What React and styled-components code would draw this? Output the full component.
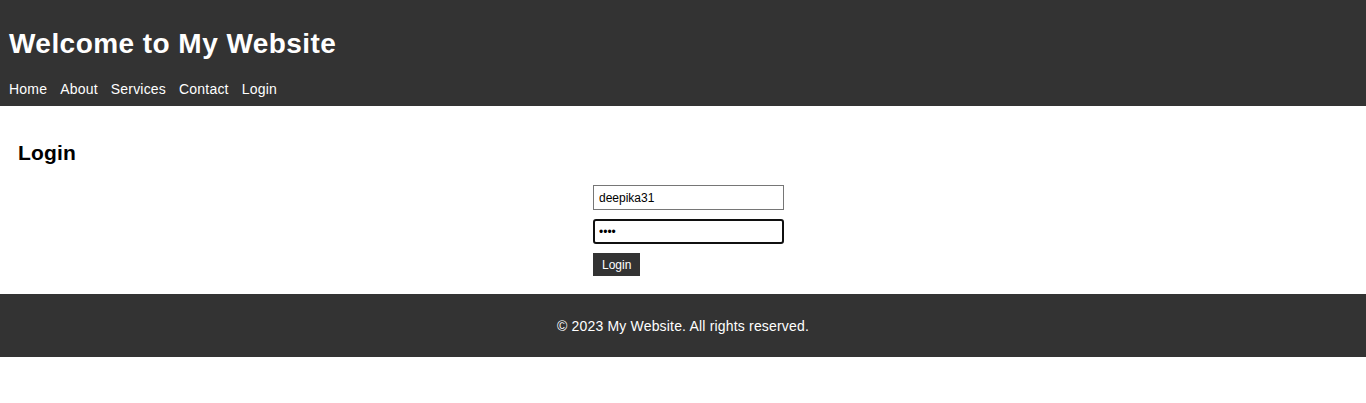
import React from "react";
import styled, { createGlobalStyle } from "styled-components";

const Global = createGlobalStyle`
  html, body { margin: 0; padding: 0; background: #fff; }
  body { font-family: "Liberation Sans", Arial, sans-serif; font-size: 14px; color: #000; }
`;

const Header = styled.header`
  background: #333;
  color: #fff;
  padding: 10px 9px 9px;
`;

const Title = styled.h1`
  font-size: 28px;
  font-weight: bold;
  letter-spacing: 0.45px;
  margin: 18px 0 21px;
`;

const Nav = styled.nav`
  display: flex;
  gap: 13px;
`;

const NavLink = styled.a`
  color: #fff;
  text-decoration: none;
  font-size: 14px;
  letter-spacing: 0.2px;
`;

const Main = styled.main`
  padding: 19px 18px 18px;
`;

const Heading = styled.h2`
  font-size: 21px;
  font-weight: bold;
  letter-spacing: 0.2px;
  margin: 16px 0 20px;
`;

const Form = styled.form`
  width: 180px;
  margin: 0 auto;
  display: flex;
  flex-direction: column;
  align-items: flex-start;
`;

const Input = styled.input`
  box-sizing: border-box;
  width: 191px;
  height: 25px;
  margin: 0 0 9px;
  font-family: "Liberation Sans", Arial, sans-serif;
  font-size: 12px;
  color: #000;
  background: #fff;
  border: ${(p) => (p.$focused ? "2px solid #101010" : "1px solid #767676")};
  border-radius: ${(p) => (p.$focused ? "3px" : "0")};
  padding: 0 ${(p) => (p.$focused ? "4px" : "5px")};
  outline: none;
`;

const Button = styled.button`
  height: 23px;
  padding: 0 9px;
  border: none;
  background: #333;
  color: #fff;
  font-family: "Liberation Sans", Arial, sans-serif;
  font-size: 12px;
  cursor: pointer;
`;

const Footer = styled.footer`
  background: #333;
  color: #fff;
  text-align: center;
  padding: 10px 10px 9px;
`;

const FooterText = styled.p`
  margin: 14px 0;
  font-size: 14px;
  letter-spacing: 0.18px;
`;

export default function App() {
  return (
    <>
      <Global />
      <Header>
        <Title>Welcome to My Website</Title>
        <Nav>
          {["Home", "About", "Services", "Contact", "Login"].map((l) => (
            <NavLink key={l} href="#">{l}</NavLink>
          ))}
        </Nav>
      </Header>
      <Main>
        <Heading>Login</Heading>
        <Form onSubmit={(e) => e.preventDefault()}>
          <Input type="text" defaultValue="deepika31" />
          <Input type="password" defaultValue="abcd" $focused />
          <Button type="submit">Login</Button>
        </Form>
      </Main>
      <Footer>
        <FooterText>© 2023 My Website. All rights reserved.</FooterText>
      </Footer>
    </>
  );
}
